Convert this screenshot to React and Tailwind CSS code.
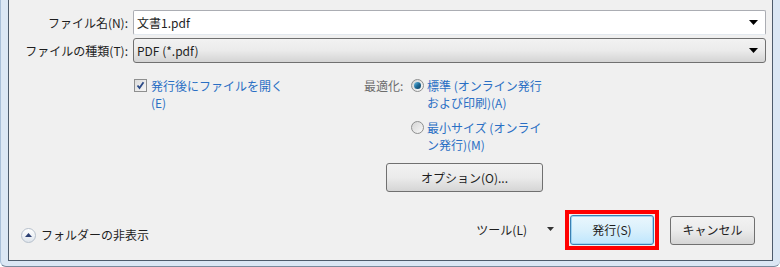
import React from "react";

const font = { fontFamily: '"Noto Sans CJK JP", "Noto Sans", sans-serif' };

function DropArrow() {
  return (
    <svg width="9" height="5" viewBox="0 0 9 5" className="shrink-0">
      <path d="M0 0 H9 L4.5 5 Z" fill="#000" />
    </svg>
  );
}

function Checkbox() {
  return (
    <div className="w-[13px] h-[13px] border border-[#8e8f8f] bg-gradient-to-br from-[#dcdcdc] to-[#f6f6f6] flex items-center justify-center shrink-0">
      <svg width="9" height="9" viewBox="0 0 9 9">
        <path d="M1.5 4.5 L3.5 7 L7.5 1.2" stroke="#2b4a87" strokeWidth="1.8" fill="none" />
      </svg>
    </div>
  );
}

function Radio({ checked }) {
  return (
    <div className="w-[13px] h-[13px] rounded-full border border-[#8e8f8f] bg-gradient-to-br from-[#d5d5d5] to-[#f8f8f8] flex items-center justify-center shrink-0">
      {checked && (
        <div className="w-[7px] h-[7px] rounded-full bg-gradient-to-br from-[#6fc4e8] via-[#1f6c99] to-[#0c3e5e]" />
      )}
    </div>
  );
}

export default function App() {
  return (
    <div className="w-[780px] h-[267px] bg-[#dbe7f4] pl-[7px] pr-[7px] pb-[5px] border-l border-[#a8bfd8] rounded-bl-[6px] rounded-br-[6px] border-b border-b-[#7a8a9c] overflow-hidden" style={font}>
      <div className="h-full bg-[#f0f0f0] border-l border-r border-b border-[#4d5b6b] text-[12px] text-[#1e1e1e] flex flex-col">
        {/* file name / type */}
        <div className="pt-[10px] flex flex-col gap-[3px]">
          <div className="flex items-center">
            <div className="w-[120px] text-right pr-[1px]">ファイル名(N):</div>
            <div className="ml-[4px] w-[633px] h-[25px] bg-white border border-[#abadb3] border-t-[#abadb3] border-b-[#e3e9ef] rounded-[2px] flex items-center justify-between pl-[3px] pr-[7px]">
              <span>文書1.pdf</span>
              <DropArrow />
            </div>
          </div>
          <div className="flex items-center">
            <div className="w-[120px] text-right pr-[1px]">ファイルの種類(T):</div>
            <div className="ml-[4px] w-[633px] h-[25px] border border-[#707070] rounded-[3px] bg-gradient-to-b from-[#f2f2f2] via-[#ebebeb] to-[#d4d4d4] flex items-center justify-between pl-[3px] pr-[7px]">
              <span>PDF (*.pdf)</span>
              <DropArrow />
            </div>
          </div>
        </div>

        {/* options */}
        <div className="flex mt-[14px] leading-[17px]">
          <div className="ml-[125px] flex items-start gap-[4px]">
            <div className="mt-[2px]"><Checkbox /></div>
            <div className="text-[#2a6fc4] w-[140px]">
              <div>発行後にファイルを開く</div>
              <div>(E)</div>
            </div>
          </div>
          <div className="ml-[73px] flex flex-col">
            <div className="flex items-start">
              <span className="text-[#6d6d6d] w-[47px]">最適化:</span>
              <div className="mt-[2px] mr-[3px]"><Radio checked /></div>
              <div className="text-[#2a6fc4]">
                <div>標準 (オンライン発行</div>
                <div>および印刷)(A)</div>
              </div>
            </div>
            <div className="flex items-start mt-[8px] pl-[47px]">
              <div className="mt-[2px] mr-[3px]"><Radio /></div>
              <div className="text-[#2a6fc4]">
                <div>最小サイズ (オンライ</div>
                <div>ン発行)(M)</div>
              </div>
            </div>
            <button className="mt-[10px] ml-[22px] w-[157px] h-[29px] border border-[#707070] rounded-[3px] bg-gradient-to-b from-[#f2f2f2] via-[#ebebeb] to-[#d5d5d5] text-[#1e1e1e]">
              オプション(O)...
            </button>
          </div>
        </div>

        {/* footer */}
        <div className="flex items-center mt-auto mb-[10px]">
          <div className="ml-[12px] flex items-center gap-[5px] mt-[10px]">
            <div className="w-[15px] h-[15px] rounded-full border border-[#b6c0cc] bg-gradient-to-b from-[#ffffff] to-[#dfe5ec] flex items-center justify-center">
              <svg width="7" height="4" viewBox="0 0 7 4">
                <path d="M0 4 L3.5 0 L7 4 Z" fill="#2c3f73" />
              </svg>
            </div>
            <span>フォルダーの非表示</span>
          </div>
          <div className="ml-auto flex items-center">
            <span>ツール(L)</span>
            <div className="ml-[20px] mb-[3px]">
              <svg width="7" height="4" viewBox="0 0 7 4"><path d="M0 0 H7 L3.5 4 Z" fill="#333" /></svg>
            </div>
            <div className="ml-[11px] border-[4px] border-[#ff0000] p-[1px]">
              <button className="w-[84px] h-[30px] border border-[#3c7fb1] rounded-[3px] bg-gradient-to-b from-[#eaf6fd] via-[#d9f0fc] to-[#bee6fd] text-[#1e1e1e] shadow-[inset_0_0_0_1px_#9ed4f2]">
                発行(S)
              </button>
            </div>
            <button className="ml-[11px] mr-[17px] w-[85px] h-[29px] border border-[#707070] rounded-[3px] bg-gradient-to-b from-[#f2f2f2] via-[#ebebeb] to-[#d5d5d5] text-[#1e1e1e]">
              キャンセル
            </button>
          </div>
        </div>
      </div>
    </div>
  );
}
